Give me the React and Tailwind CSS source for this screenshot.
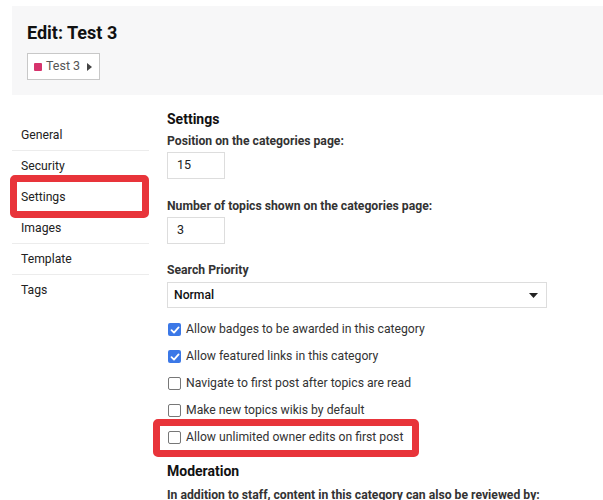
import React from 'react'

const navItems = ['General', 'Security', 'Settings', 'Images', 'Template', 'Tags']

const checks = [
  { label: 'Allow badges to be awarded in this category', on: true },
  { label: 'Allow featured links in this category', on: true },
  { label: 'Navigate to first post after topics are read', on: false },
  { label: 'Make new topics wikis by default', on: false },
  { label: 'Allow unlimited owner edits on first post', on: false, mark: true },
]

function Box({ on }) {
  if (on) {
    return (
      <span className="w-[13px] h-[13px] rounded-[2px] bg-[#3b78e7] flex items-center justify-center shrink-0">
        <svg width="10" height="10" viewBox="0 0 10 10">
          <path d="M1.5 5.2 L4 7.6 L8.6 2.4" fill="none" stroke="#fff" strokeWidth="1.8" strokeLinecap="round" strokeLinejoin="round" />
        </svg>
      </span>
    )
  }
  return <span className="w-[13px] h-[13px] rounded-[2px] border border-[#777] bg-white shrink-0" />
}

export default function App() {
  return (
    <div className="w-[603px] h-[500px] overflow-hidden bg-white text-[#222]" style={{ fontFamily: 'Roboto, "Liberation Sans", sans-serif' }}>
      <div className="mt-[6px] ml-[12px] h-[89px] bg-[#f7f7f8] pl-[15px] pt-[15px]">
        <h1 className="text-[18px] leading-[24px] font-bold text-[#111]">Edit: Test 3</h1>
        <div className="mt-[8px] w-[73px] h-[27px] border border-[#c8c8c8] bg-white flex items-center pl-[6px]">
          <span className="w-[8px] h-[8px] bg-[#d6336c] rounded-[1px]" />
          <span className="ml-[4px] text-[12.5px] text-[#555]">Test 3</span>
          <svg className="ml-[7px]" width="5" height="8" viewBox="0 0 5 8"><path d="M0 0 L5 4 L0 8 Z" fill="#444" /></svg>
        </div>
      </div>

      <div className="flex">
        <div className="w-[137px] ml-[12px] mt-[25px]">
          {navItems.map((n, i) => (
            <div key={n} className={`h-[31px] flex items-center pl-[9px] text-[12.2px] text-[#222] ${i < 5 ? 'border-b border-[#ececec]' : ''} ${n === 'Settings' ? 'relative' : ''}`}>
              {n}
              {n === 'Settings' && <span className="absolute left-[-2px] top-[-7px] w-[139px] h-[43px] border-[7px] border-[#e8343a] rounded-[5px]" />}
            </div>
          ))}
        </div>

        <div className="ml-[18px] pt-[14px] w-[420px]">
          <h2 className="text-[14px] leading-[20px] font-bold text-[#111]">Settings</h2>
          <div className="mt-[3px] text-[12.2px] leading-[18px] font-bold text-[#333]">Position on the categories page:</div>
          <div className="mt-[2px] w-[58px] h-[27px] border border-[#ddd] flex items-center pl-[9px] text-[12.5px] text-[#222]">15</div>
          <div className="mt-[18px] text-[12.2px] leading-[18px] font-bold text-[#333]">Number of topics shown on the categories page:</div>
          <div className="mt-[2px] w-[58px] h-[27px] border border-[#ddd] flex items-center pl-[9px] text-[12.5px] text-[#222]">3</div>
          <div className="mt-[17px] text-[12.2px] leading-[18px] font-bold text-[#333]">Search Priority</div>
          <div className="mt-[3px] w-[380px] h-[26px] border border-[#ddd] flex items-center justify-between pl-[6px] pr-[8px] text-[12.2px] font-medium text-[#111]">
            <span>Normal</span>
            <svg width="9" height="5" viewBox="0 0 9 5"><path d="M0 0 L9 0 L4.5 5 Z" fill="#222" /></svg>
          </div>
          <div className="mt-[8px]">
            {checks.map(c => (
              <div key={c.label} className="relative h-[27px] flex items-center pl-[1px] gap-[5px] text-[12.2px] text-[#333]">
                <Box on={c.on} />
                <span>{c.label}</span>
                {c.mark && <span className="absolute left-[-14px] top-[-5px] w-[266px] h-[38px] border-[7px] border-[#e8343a] rounded-[5px]" />}
              </div>
            ))}
          </div>
          <h2 className="mt-[10px] text-[14px] leading-[20px] font-bold text-[#111]">Moderation</h2>
          <div className="mt-[5px] text-[12.2px] leading-[18px] font-bold text-[#333] whitespace-nowrap">In addition to staff, content in this category can also be reviewed by:</div>
        </div>
      </div>
    </div>
  )
}
